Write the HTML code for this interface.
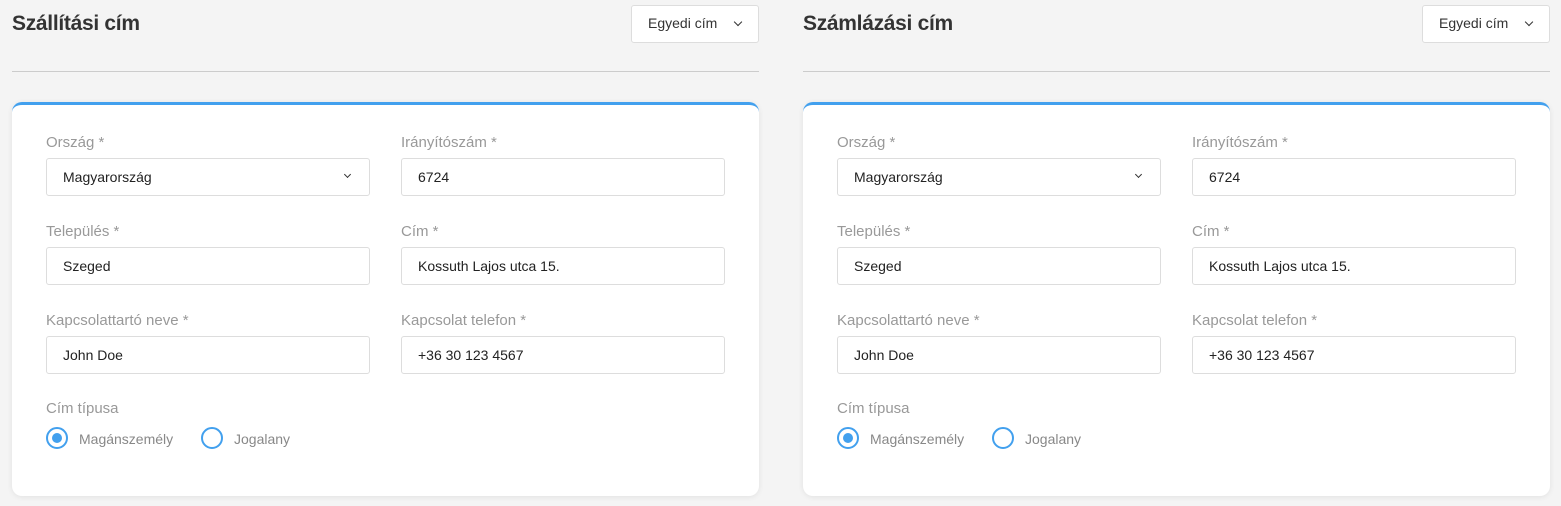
<!DOCTYPE html>
<html><head><meta charset="utf-8"><style>
*{box-sizing:border-box;margin:0;padding:0}
body{width:1561px;height:506px;background:#f4f4f4;font-family:"Liberation Sans",Arial,sans-serif;position:relative;overflow:hidden}
.col{position:absolute;top:0;width:747px;height:506px}
.t{position:absolute;left:0;top:12px;font-size:21px;font-weight:bold;color:#333;letter-spacing:-0.3px}
.btn{position:absolute;left:619px;top:5px;width:128px;height:38px;background:#fff;border:1px solid #ddd;border-radius:3px;font-size:14px;color:#333;padding:9px 0 0 16px}
.chev{position:absolute;width:6px;height:6px;border-right:1.5px solid #333;border-bottom:1.5px solid #333;transform:rotate(45deg)}
.hr{position:absolute;left:0;top:71px;width:747px;height:1px;background:#ccc}
.card{position:absolute;left:0;top:102px;width:747px;height:394px;background:#fff;border-top:3px solid #42a0ee;border-radius:10px;box-shadow:0 1px 6px rgba(0,0,0,.08)}
.lb{position:absolute;font-size:15px;color:#999}
.in{position:absolute;width:324px;height:38px;border:1px solid #ddd;border-radius:3px;font-size:14px;color:#222;padding:10px 0 0 16px}
.r{position:absolute;width:22px;height:22px;border:2px solid #42a0ee;border-radius:50%}
.r.on::after{content:"";position:absolute;left:4px;top:4px;width:10px;height:10px;border-radius:50%;background:#42a0ee}
.rl{position:absolute;font-size:14px;color:#888}
</style></head><body>
<div class="col" style="left:12px">
<div class="t">Szállítási cím</div>
<div class="btn">Egyedi cím<span class="chev" style="left:103px;top:13px"></span></div>
<div class="hr"></div>
<div class="card">
<div class="lb" style="left:34px;top:29px">Ország *</div>
<div class="lb" style="left:389px;top:29px">Irányítószám *</div>
<div class="in" style="left:34px;top:53px">Magyarország<span class="chev" style="left:298px;top:13px;width:5px;height:5px"></span></div>
<div class="in" style="left:389px;top:53px">6724</div>
<div class="lb" style="left:34px;top:118px">Település *</div>
<div class="lb" style="left:389px;top:118px">Cím *</div>
<div class="in" style="left:34px;top:142px">Szeged</div>
<div class="in" style="left:389px;top:142px">Kossuth Lajos utca 15.</div>
<div class="lb" style="left:34px;top:207px">Kapcsolattartó neve *</div>
<div class="lb" style="left:389px;top:207px">Kapcsolat telefon *</div>
<div class="in" style="left:34px;top:231px">John Doe</div>
<div class="in" style="left:389px;top:231px">+36 30 123 4567</div>
<div class="lb" style="left:34px;top:295px">Cím típusa</div>
<div class="r on" style="left:34px;top:322px"></div><div class="rl" style="left:67px;top:326px">Magánszemély</div>
<div class="r" style="left:189px;top:322px"></div><div class="rl" style="left:222px;top:326px">Jogalany</div>
</div></div>
<div class="col" style="left:803px">
<div class="t">Számlázási cím</div>
<div class="btn">Egyedi cím<span class="chev" style="left:103px;top:13px"></span></div>
<div class="hr"></div>
<div class="card">
<div class="lb" style="left:34px;top:29px">Ország *</div>
<div class="lb" style="left:389px;top:29px">Irányítószám *</div>
<div class="in" style="left:34px;top:53px">Magyarország<span class="chev" style="left:298px;top:13px;width:5px;height:5px"></span></div>
<div class="in" style="left:389px;top:53px">6724</div>
<div class="lb" style="left:34px;top:118px">Település *</div>
<div class="lb" style="left:389px;top:118px">Cím *</div>
<div class="in" style="left:34px;top:142px">Szeged</div>
<div class="in" style="left:389px;top:142px">Kossuth Lajos utca 15.</div>
<div class="lb" style="left:34px;top:207px">Kapcsolattartó neve *</div>
<div class="lb" style="left:389px;top:207px">Kapcsolat telefon *</div>
<div class="in" style="left:34px;top:231px">John Doe</div>
<div class="in" style="left:389px;top:231px">+36 30 123 4567</div>
<div class="lb" style="left:34px;top:295px">Cím típusa</div>
<div class="r on" style="left:34px;top:322px"></div><div class="rl" style="left:67px;top:326px">Magánszemély</div>
<div class="r" style="left:189px;top:322px"></div><div class="rl" style="left:222px;top:326px">Jogalany</div>
</div></div>
</body></html>
